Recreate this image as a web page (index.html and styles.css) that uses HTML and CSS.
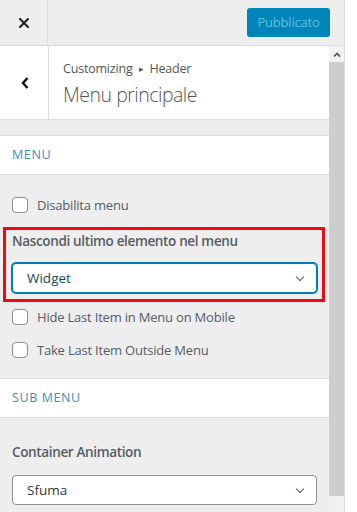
FILE: index.html
```html
<!DOCTYPE html>
<html lang="it">
<head>
	<meta charset="UTF-8">
	<title>Personalizza - Menu principale</title>
	<link rel="stylesheet" href="styles.css">
</head>
<body>
	<div id="panel">
		<!-- barra superiore -->
		<div class="topbar">
			<a href="#" class="close_btn" title="Chiudi">
				<svg width="10" height="10" viewBox="0 0 10 10"><path d="M1 1L9 9M9 1L1 9" stroke="#23282d" stroke-width="2.2" stroke-linecap="square"/></svg>
			</a>
			<div class="actions">
				<button type="button" class="publish" disabled>Pubblicato</button>
			</div>
		</div>
		<div class="body">
			<div class="content">
				<!-- titolo sezione -->
				<div class="section_title">
					<a href="#" class="back_btn" title="Indietro">
						<svg width="8" height="12" viewBox="0 0 8 12"><path d="M6.5 1L2 6L6.5 11" fill="none" stroke="#111" stroke-width="2.4"/></svg>
					</a>
					<div class="title_text">
						<span class="crumb">Customizing <span class="sep">&#9656;</span> Header</span>
						<h3>Menu principale</h3>
					</div>
				</div>
				<!-- gruppo menu -->
				<div class="group_head first">Menu</div>
				<ul class="controls">
					<li class="check_row row_disable">
						<label><input type="checkbox"><span class="box"></span>Disabilita menu</label>
					</li>
					<li class="marked">
						<span class="ctrl_title">Nascondi ultimo elemento nel menu</span>
						<div class="select focus">Widget<span class="chevron"></span></div>
					</li>
					<li class="check_row row_mobile">
						<label><input type="checkbox"><span class="box"></span>Hide Last Item in Menu on Mobile</label>
					</li>
					<li class="check_row row_outside">
						<label><input type="checkbox"><span class="box"></span>Take Last Item Outside Menu</label>
					</li>
				</ul>
				<!-- gruppo sottomenu -->
				<div class="group_head">Sub Menu</div>
				<ul class="controls">
					<li class="anim">
						<span class="ctrl_title">Container Animation</span>
						<div class="select">Sfuma<span class="chevron"></span></div>
					</li>
				</ul>
			</div>
			<!-- barra di scorrimento -->
			<div class="scrollbar">
				<span class="sb_up"><svg width="8" height="5" viewBox="0 0 8 5"><path d="M1 4.5L4 1.5L7 4.5" fill="none" stroke="#505050" stroke-width="1.6"/></svg></span>
				<span class="sb_thumb"></span>
			</div>
		</div>
	</div>
</body>
</html>
```

FILE: styles.css
```css
/*reset*/
div, ul, li, h3, a, span, button, label{
	margin: 0;
	padding: 0;
}
li{
	list-style: none;
}
a{
	text-decoration: none;
	color: #555;
}
html, body{
	margin: 0;
	height: 100%;
	background: #fff;
	overflow: hidden;
}
body{
	font: 13px/1.4 "Open Sans", "Noto Sans", sans-serif;
	color: #555d66;
}
/*pannello*/
#panel{
	display: flex;
	flex-direction: column;
	width: 344px;
	height: 100%;
	background: #eee;
	border-right: 1px solid #ddd;
}
/*barra superiore*/
.topbar{
	display: flex;
	height: 45px;
	border-bottom: 1px solid #ddd;
	background: #eee;
}
.close_btn{
	display: flex;
	align-items: center;
	justify-content: center;
	width: 47px;
	border-right: 1px solid #ddd;
}
.actions{
	flex: 1;
	display: flex;
	justify-content: flex-end;
	align-items: center;
	padding-right: 14px;
}
.publish{
	width: 83px;
	height: 29px;
	margin-top: -1px;
	border: none;
	border-radius: 3px;
	background: #0085ba;
	color: #5fc0e2;
	font: 13px "Open Sans", "Noto Sans", sans-serif;
	letter-spacing: -0.2px;
}
/*corpo*/
.body{
	flex: 1;
	display: flex;
	min-height: 0;
}
.content{
	flex: 1;
}
.scrollbar{
	display: flex;
	flex-direction: column;
	width: 15px;
	background: #f1f1f1;
}
.sb_up{
	display: flex;
	align-items: center;
	justify-content: center;
	height: 16px;
}
.sb_thumb{
	height: 434px;
	background: #cdcdcd;
}
/*titolo sezione*/
.section_title{
	display: flex;
	height: 73px;
	background: #fff;
	border-bottom: 1px solid #ddd;
}
.back_btn{
	display: flex;
	align-items: center;
	justify-content: center;
	width: 47px;
	padding-left: 1px;
	border-right: 1px solid #ddd;
}
.title_text{
	padding: 14px 0 0 14px;
}
.crumb{
	display: block;
	font-size: 12.5px;
	line-height: 17px;
	color: #555;
	letter-spacing: -0.2px;
}
.crumb .sep{
	font-size: 9px;
	padding: 0 3px;
	vertical-align: 1px;
}
.title_text h3{
	margin-top: 6px;
	font-size: 19.5px;
	line-height: 24px;
	font-weight: 300;
	color: #555;
	letter-spacing: -0.5px;
}
/*intestazione gruppo*/
.group_head{
	height: 38px;
	padding-left: 12px;
	background: #fff;
	border-top: 1px solid #ddd;
	border-bottom: 1px solid #ddd;
	line-height: 38px;
	font-size: 12.5px;
	text-transform: uppercase;
	letter-spacing: 0.6px;
	color: #3b8dbd;
}
.group_head.first{
	margin-top: 15px;
}
/*controlli*/
.controls{
	padding: 0 12px;
}
.check_row label{
	display: flex;
	align-items: center;
	height: 16px;
	font-size: 13px;
	letter-spacing: -0.2px;
	color: #555d66;
}
.check_row input{
	display: none;
}
.check_row .box{
	width: 14px;
	height: 14px;
	margin-right: 9px;
	border: 1px solid #8c8f94;
	border-radius: 4px;
	background: #fff;
}
.row_disable{
	padding-top: 22px;
}
.row_mobile{
	padding-top: 7px;
}
.row_outside{
	padding-top: 17px;
	padding-bottom: 20px;
}
.ctrl_title{
	display: block;
	font-size: 13.5px;
	line-height: 18px;
	font-weight: 600;
	letter-spacing: -0.35px;
	color: #555d66;
}
/*riquadro evidenziato*/
.marked{
	margin: 14px -8px 0 -9px;
	padding: 2px 5px 6px 6px;
	border: 3px solid #ee0a0f;
}
.marked .ctrl_title{
	margin-bottom: 13px;
}
.anim{
	padding-top: 25px;
}
.anim .ctrl_title{
	margin-bottom: 14px;
}
.select{
	position: relative;
	height: 28px;
	padding-left: 14px;
	border: 1px solid #8c8f94;
	border-radius: 4px;
	background: #fff;
	line-height: 28px;
	font-size: 13.5px;
	color: #32373c;
}
.select.focus{
	border-color: #007cba;
	box-shadow: 0 0 0 1px #007cba;
	color: #16465f;
}
.chevron{
	position: absolute;
	right: 13px;
	top: 10px;
	width: 5px;
	height: 5px;
	border-right: 1.8px solid #555;
	border-bottom: 1.8px solid #555;
	transform: rotate(45deg);
}
```
